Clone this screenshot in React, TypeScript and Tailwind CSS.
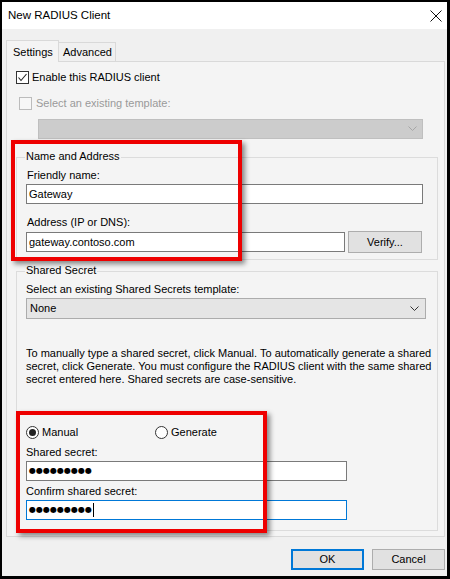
import type { ReactNode } from 'react'

const FONT = 'font-["Liberation_Sans",Arial,sans-serif]'

function Chevron({ disabled }: { disabled?: boolean }) {
  return (
    <svg width="9" height="6" viewBox="0 0 9 6" className="shrink-0">
      <path d="M0.5 0.5 L4.5 4.5 L8.5 0.5" fill="none" stroke={disabled ? '#a6a6a6' : '#333'} strokeWidth="1" />
    </svg>
  )
}

function CheckBox({ checked, disabled }: { checked?: boolean, disabled?: boolean }) {
  return (
    <span
      className={`grid size-[13px] shrink-0 place-items-center border ${
        disabled ? 'border-[#bcbcbc] bg-[#f7f7f7]' : 'border-[#333] bg-white'
      }`}
    >
      {checked && (
        <svg width="11" height="11" viewBox="0 0 11 11">
          <path d="M1.5 5.5 L4 8.5 L9.5 2" fill="none" stroke="#222" strokeWidth="1.1" />
        </svg>
      )}
    </span>
  )
}

function Radio({ checked }: { checked?: boolean }) {
  return (
    <span className="grid size-[13px] shrink-0 place-items-center rounded-full border border-[#333] bg-white">
      {checked && <span className="size-[7px] rounded-full bg-[#222]" />}
    </span>
  )
}

function Masked({ count }: { count: number }) {
  return (
    <span className="flex items-center font-['DejaVu_Sans',sans-serif]">
      {'●'.repeat(count).split('').map((c, i) => (
        <span key={i} className="inline-block w-[7px] text-center text-[8px] leading-none">
          {c}
        </span>
      ))}
    </span>
  )
}

function Group({ title, className, children }: { title: string, className: string, children: ReactNode }) {
  return (
    <div className={`relative border border-[#dcdcdc] ${className}`}>
      <span className="absolute -top-[8px] left-[8px] bg-[#f4f4f4] px-[1px] leading-[13px]">{title}</span>
      {children}
    </div>
  )
}

export default function App() {
  return (
    <div className={`relative h-[579px] w-[450px] bg-black pt-[2px] pr-[3px] pb-[3px] pl-[2px] text-[11px] text-black ${FONT}`}>
      <div className="flex h-[574px] w-[445px] flex-col bg-[#f0f0f0]">
        {/* title bar */}
        <div className="flex h-[27px] shrink-0 items-center justify-between bg-white pr-[4px] pl-[6px]">
          <span className="text-[11.5px]">New RADIUS Client</span>
          <svg width="12" height="12" viewBox="0 0 12 12" className="mr-[1px]">
            <path d="M0.5 0.5 L11.5 11.5 M11.5 0.5 L0.5 11.5" stroke="#111" strokeWidth="1" />
          </svg>
        </div>

        <div className="flex flex-1 flex-col pr-[2px] pl-[4px]">
          {/* tabs */}
          <div className="mt-[11px] flex items-end">
            <div className="relative z-10 -mb-px flex h-[22px] w-[53px] items-start border border-b-0 border-[#d9d9d9] bg-[#f4f4f4] pt-[3px] pl-[6px]">
              Settings
            </div>
            <div className="flex h-[19px] w-[57px] items-center border border-b-0 border-l-0 border-[#d9d9d9] bg-[#f0f0f0] pl-[4px]">
              Advanced
            </div>
          </div>

          {/* panel */}
          <div className="flex h-[476px] w-[439px] flex-col border border-[#d9d9d9] bg-[#f4f4f4] pl-[9px]">
            <div className="mt-[9px] flex items-center gap-[3px]">
              <CheckBox checked />
              <span className="leading-[13px]">Enable this RADIUS client</span>
            </div>
            <div className="mt-[13px] ml-[3px] flex items-center gap-[4px] text-[#9a9a9a]">
              <CheckBox disabled />
              <span className="leading-[13px]">Select an existing template:</span>
            </div>
            <div className="mt-[9px] ml-[22px] flex h-[20px] w-[385px] items-center justify-end border border-[#bfbfbf] bg-[#cccccc] pr-[5px]">
              <Chevron disabled />
            </div>

            <Group title="Name and Address" className="mt-[18px] h-[103px] w-[422px] pl-[9px]">
              <div className="mt-[11px] h-[13px] pl-[1px] leading-[13px]">Friendly name:</div>
              <div className="mt-[2px] flex h-[20px] w-[397px] items-center border border-[#7a7a7a] bg-white pl-[2px]">
                Gateway
              </div>
              <div className="mt-[12px] h-[13px] pl-[1px] leading-[13px]">Address (IP or DNS):</div>
              <div className="mt-[3px] flex h-[20px] items-center gap-[3px]">
                <div className="flex h-[20px] w-[319px] items-center border border-[#7a7a7a] bg-white pl-[2px]">
                  gateway.contoso.com
                </div>
                <button type="button" className="h-[22px] w-[74px] border border-[#adadad] bg-[#e1e1e1] pt-px">
                  Verify...
                </button>
              </div>
            </Group>

            <Group title="Shared Secret" className="mt-[11px] h-[260px] w-[422px] pl-[9px]">
              <div className="mt-[11px] h-[13px] leading-[13px]">Select an existing Shared Secrets template:</div>
              <div className="mt-[2px] flex h-[21px] w-[400px] items-center justify-between border border-[#acacac] bg-[#e5e5e5] pr-[6px] pl-[3px]">
                <span>None</span>
                <Chevron />
              </div>
              <div className="mt-[28px] leading-[13px] whitespace-nowrap">
                <div>To manually type a shared secret, click Manual. To automatically generate a shared</div>
                <div>secret, click Generate. You must configure the RADIUS client with the same shared</div>
                <div>secret entered here. Shared secrets are case-sensitive.</div>
              </div>
              <div className="mt-[40px] flex h-[13px] items-center">
                <div className="flex w-[129px] items-center gap-[3px]">
                  <Radio checked />
                  <span className="leading-[13px]">Manual</span>
                </div>
                <div className="flex items-center gap-[3px]">
                  <Radio />
                  <span className="leading-[13px]">Generate</span>
                </div>
              </div>
              <div className="mt-[7px] h-[13px] leading-[13px]">Shared secret:</div>
              <div className="mt-[2px] flex h-[20px] w-[321px] items-center border border-[#7a7a7a] bg-white pl-[2px]">
                <Masked count={9} />
              </div>
              <div className="mt-[4px] h-[13px] leading-[13px]">Confirm shared secret:</div>
              <div className="mt-[2px] flex h-[20px] w-[321px] items-center border border-[#0078d7] bg-white pl-[2px]">
                <Masked count={9} />
                <span className="ml-px h-[14px] w-px bg-black" />
              </div>
            </Group>
          </div>

          {/* buttons */}
          <div className="mt-[12px] flex justify-end gap-[8px]">
            <button type="button" className="h-[21px] w-[73px] border-2 border-[#0078d7] bg-[#e1e1e1]">
              OK
            </button>
            <button type="button" className="h-[21px] w-[73px] border border-[#adadad] bg-[#e1e1e1]">
              Cancel
            </button>
          </div>
        </div>
      </div>

      {/* annotation highlights */}
      <div className="pointer-events-none absolute top-[140px] left-[11px] h-[121px] w-[231px] border-4 border-[#ee0000] shadow-[3px_3px_5px_rgba(0,0,0,0.45)]" />
      <div className="pointer-events-none absolute top-[411px] left-[16px] h-[122px] w-[251px] border-4 border-[#ee0000] shadow-[3px_3px_5px_rgba(0,0,0,0.45)]" />
    </div>
  )
}
